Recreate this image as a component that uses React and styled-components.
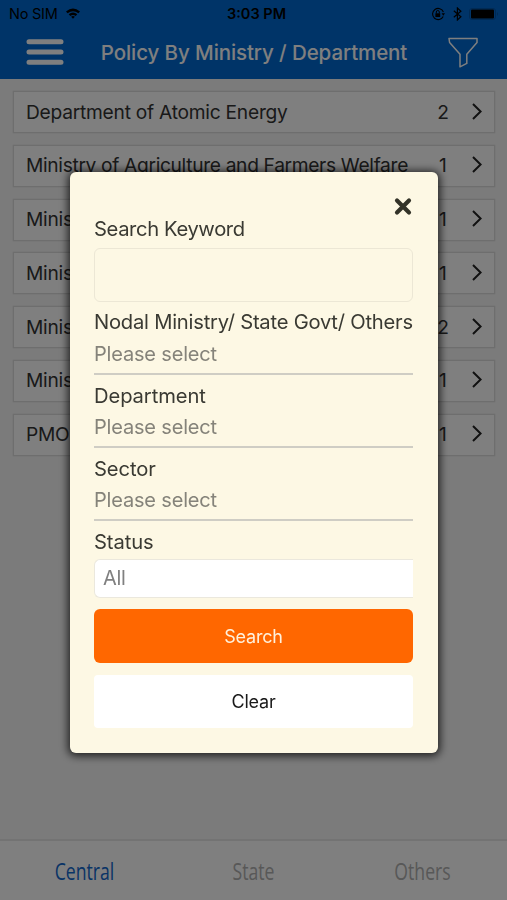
import React from "react";
import styled, { createGlobalStyle } from "styled-components";

const Global = createGlobalStyle`
  * { box-sizing: border-box; }
  html, body { margin: 0; padding: 0; }
  body {
    font-family: Inter, "Liberation Sans", sans-serif;
    background: #f6f6f6;
    overflow: hidden;
  }
  button { font-family: inherit; border: 0; padding: 0; background: none; }
`;

const Screen = styled.div`
  width: 507px;
  height: 900px;
  display: flex;
  flex-direction: column;
  background: #f6f6f6;
`;

const Header = styled.header`
  height: 79px;
  flex: none;
  background: #0068d0;
`;

const StatusBar = styled.div`
  height: 27px;
  display: grid;
  grid-template-columns: 1fr auto 1fr;
  align-items: center;
  padding: 0 8px 0 9px;
  color: #000;
  font-size: 14.5px;
`;

const Carrier = styled.div`
  display: flex;
  align-items: center;
  gap: 8px;
  letter-spacing: -0.25px;
`;

const Clock = styled.div`
  font-weight: 600;
  font-size: 14.5px;
  padding-left: 5px;
`;

const Indicators = styled.div`
  display: flex;
  align-items: center;
  justify-content: flex-end;
  gap: 7.5px;
`;

const NavBar = styled.div`
  height: 52px;
  display: flex;
  align-items: center;
  padding: 0 29px 2px 26px;
`;

const IconButton = styled.button`
  display: flex;
  color: #fff;
`;

const Title = styled.h1`
  flex: 1;
  margin: 0;
  padding-right: 4px;
  text-align: center;
  color: #fff;
  font-size: 20.5px;
  font-weight: 550;
  letter-spacing: -0.09px;
  white-space: nowrap;
`;

const List = styled.main`
  flex: 1;
  display: flex;
  flex-direction: column;
  gap: 11.8px;
  padding: 12px 12px 0 13px;
`;

const Row = styled.div`
  height: 42px;
  display: flex;
  align-items: center;
  border: 1px solid #dcdcdc;
  box-shadow: 0 0 1px #ccc;
  background: #fff;
  padding: 0 12px 1px 12px;
  font-size: 19.2px;
  color: #333;
`;

const RowName = styled.span`
  flex: 1;
  white-space: nowrap;
  letter-spacing: ${(p) => p.$track || -0.25}px;
`;

const RowCount = styled.span`
  width: 14px;
  text-align: center;
  margin-right: 22px;
`;

const Tabs = styled.nav`
  height: 61px;
  flex: none;
  display: grid;
  grid-template-columns: repeat(3, 1fr);
  align-items: center;
  border-top: 2px solid #e6e6e6;
  background: #fff;
`;

const Tab = styled.a`
  text-align: center;
  font-family: "Open Sans", "Noto Sans", sans-serif;
  font-size: 24.5px;
  color: ${(p) => (p.$active ? "#1268cc" : "#b0b0b0")};
  transform: scaleX(0.72);
`;

const Backdrop = styled.div`
  position: fixed;
  inset: 0;
  display: flex;
  align-items: flex-start;
  justify-content: center;
  padding-top: 171.5px;
  background: rgba(0, 0, 0, 0.5);
`;

const Dialog = styled.section`
  width: 368px;
  height: 581.5px;
  padding: 22px 24.5px 0;
  display: flex;
  flex-direction: column;
  border-radius: 6px;
  background: #fdf8e4;
  box-shadow: 0 1px 8px 2px rgba(0, 0, 0, 0.75);
`;

const CloseRow = styled.div`
  height: 22px;
  display: flex;
  justify-content: flex-end;
`;

const CloseButton = styled.button`
  display: flex;
  height: 24px;
  color: #333328;
`;

const Label = styled.label`
  height: ${(p) => p.$h || 32}px;
  display: flex;
  align-items: ${(p) => (p.$top ? "flex-start" : "center")};
  padding-top: ${(p) => p.$shift || 0}px;
  font-size: 20.2px;
  color: #3a3a33;
  white-space: nowrap;
  letter-spacing: ${(p) => p.$track || -0.1}px;
`;

const KeywordBox = styled.div`
  height: 54px;
  margin-bottom: 4px;
  border: 1px solid #ece7d5;
  border-radius: 6px;
`;

const Picker = styled.div`
  height: 37px;
  display: flex;
  align-items: center;
  padding-bottom: 1.5px;
  margin-bottom: 4px;
  border-bottom: 2px solid #cfcdc4;
  font-size: 20px;
  letter-spacing: -0.18px;
  color: #85837a;
`;

const StatusSelect = styled.div`
  height: 39px;
  display: flex;
  align-items: center;
  padding-left: 8px;
  border: 1px solid #ebe8dd;
  border-right: 0;
  border-radius: 6px 0 0 6px;
  background: #fff;
  font-size: 20px;
  letter-spacing: -0.3px;
  color: #808080;
`;

const ActionButton = styled.button`
  height: 53.5px;
  margin-top: ${(p) => (p.$primary ? 11.5 : 12)}px;
  border-radius: ${(p) => (p.$primary ? 6 : 4)}px;
  background: ${(p) => (p.$primary ? "#ff6700" : "#fff")};
  color: ${(p) => (p.$primary ? "#fff1dc" : "#1a1a1a")};
  font-size: 18px;
  letter-spacing: -0.22px;
`;

const Wifi = () => (
  <svg width="14" height="11" viewBox="0 0 14 11">
    <path d="M0 3.6Q7-2.4 14 3.6L12.4 5.3Q7 1 1.6 5.3ZM2.7 6.3Q7 2.7 11.3 6.3L9.7 7.9Q7 6 4.3 7.9ZM5.1 8.8Q7 7.4 8.9 8.8L7 10.7Z" />
  </svg>
);

const RotationLock = () => (
  <svg width="14" height="14" viewBox="0 0 14 14" fill="none" stroke="#000">
    <path d="M12.2 9.5A5.6 5.6 0 1 1 12.4 5" strokeWidth="1.1" />
    <path d="M10.6 6.2h3.4l-1.7 2.5z" fill="#000" stroke="none" />
    <rect x="4.4" y="6.3" width="4.8" height="3.7" fill="#000" stroke="none" />
    <path d="M5.3 6.5V5a1.5 1.5 0 0 1 3 0v1.5" />
  </svg>
);

const Bluetooth = () => (
  <svg width="9" height="14" viewBox="0 0 9 14" fill="none" stroke="#000" strokeWidth="1.2">
    <path d="M.8 3.8 7.9 9.8 4.4 13V1l3.5 3.2L.8 10.2" />
  </svg>
);

const Battery = () => (
  <svg width="30" height="12" viewBox="0 0 30 12">
    <rect x=".5" y=".5" width="26" height="11" rx="2.5" fill="none" stroke="#0054a8" />
    <rect x="2" y="1.5" width="23" height="9" rx="1" />
    <path d="M28 4q2 2 0 4z" fill="#0054a8" />
  </svg>
);

const Menu = () => (
  <svg width="38" height="26" viewBox="0 0 38 26" stroke="currentColor" strokeWidth="5" strokeLinecap="round">
    <path d="M3 2.8h32M3 13h32M3 23.2h32" />
  </svg>
);

const Filter = () => (
  <svg width="30" height="31" viewBox="0 0 30 31" fill="none" stroke="currentColor" strokeWidth="1.5" strokeLinejoin="round">
    <path d="M1 1.5h28v4L18.8 17.2v9.2L12 29.8V17.2L1.6 5.5Z" />
  </svg>
);

const Chevron = () => (
  <svg width="10" height="18" viewBox="0 0 10 18" fill="none" stroke="#222" strokeWidth="2">
    <path d="M1 1 8.6 8.5 1 16" />
  </svg>
);

const Cross = () => (
  <svg width="20" height="24" viewBox="0 0 20 24" stroke="currentColor" strokeWidth="4.2" strokeLinecap="round">
    <path d="M4 6.6 16 18.6M16 6.6 4 18.6" />
  </svg>
);

const policies = [
  { name: "Department of Atomic Energy", count: 2, track: -0.25 },
  { name: "Ministry of Agriculture and Farmers Welfare", count: 1, track: -0.33 },
  { name: "Minist", count: 1 },
  { name: "Minist", count: 1 },
  { name: "Minist", count: 2 },
  { name: "Minist", count: 1 },
  { name: "PMO", count: 1 },
];

export default function App() {
  return (
    <Screen>
      <Global />
      <Header>
        <StatusBar>
          <Carrier>No SIM <Wifi /></Carrier>
          <Clock>3:03 PM</Clock>
          <Indicators>
            <RotationLock />
            <Bluetooth />
            <Battery />
          </Indicators>
        </StatusBar>
        <NavBar>
          <IconButton aria-label="Menu"><Menu /></IconButton>
          <Title>Policy By Ministry / Department</Title>
          <IconButton aria-label="Filter"><Filter /></IconButton>
        </NavBar>
      </Header>
      <List>
        {policies.map(({ name, count, track }, index) => (
          <Row key={index}>
            <RowName $track={track}>{name}</RowName>
            <RowCount>{count}</RowCount>
            <Chevron />
          </Row>
        ))}
      </List>
      <Tabs>
        <Tab $active>Central</Tab>
        <Tab>State</Tab>
        <Tab>Others</Tab>
      </Tabs>
      <Backdrop>
        <Dialog>
          <CloseRow>
            <CloseButton aria-label="Close"><Cross /></CloseButton>
          </CloseRow>
          <Label $h={32} $top $track={-0.38}>Search Keyword</Label>
          <KeywordBox />
          <Label $track={-0.23}>Nodal Ministry/ State Govt/ Others</Label>
          <Picker>Please select</Picker>
          <Label $shift={1}>Department</Label>
          <Picker>Please select</Picker>
          <Label $shift={1}>Sector</Label>
          <Picker>Please select</Picker>
          <Label $h={34.4}>Status</Label>
          <StatusSelect>All</StatusSelect>
          <ActionButton $primary>Search</ActionButton>
          <ActionButton>Clear</ActionButton>
        </Dialog>
      </Backdrop>
    </Screen>
  );
}
